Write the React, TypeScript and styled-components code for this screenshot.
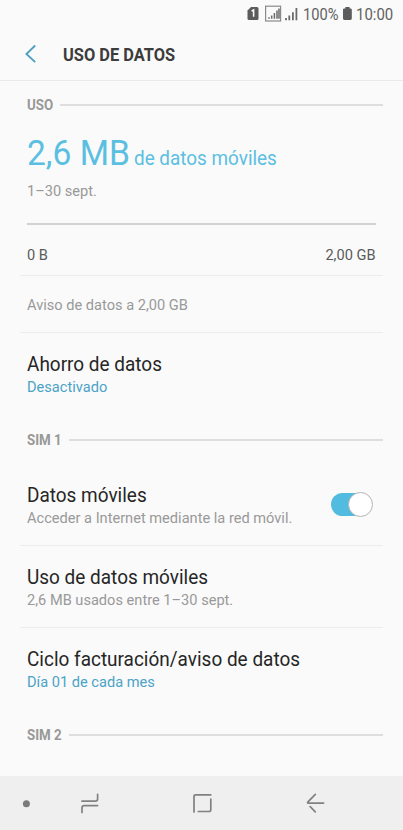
import React from "react";
import styled, { createGlobalStyle } from "styled-components";

const Global = createGlobalStyle`
  * { box-sizing: border-box; }
  body { margin: 0; background: #fafafa; font-family: Roboto, sans-serif; }
`;

const Phone = styled.div`
  width: 403px;
  height: 830px;
  display: flex;
  flex-direction: column;
  background: #fafafa;
  overflow: hidden;
`;

/* A single line of type, slightly condensed horizontally. */
const Label = styled.span<{ $scale?: number }>`
  display: block;
  white-space: nowrap;
  transform: scaleX(${p => p.$scale ?? 0.973});
  transform-origin: left center;
`;

const StatusBar = styled.div`
  height: 28px;
  display: flex;
  align-items: center;
  padding-left: 247px;
  color: #626262;
`;
const StatusText = styled(Label)<{ $width: number }>`
  width: ${p => p.$width}px;
  padding-top: 1px;
  font-size: 16.5px;
  line-height: 28px;
`;
const Icon = styled.svg`
  display: block;
  flex: none;
  fill: none;
`;

const Header = styled.header`
  height: 53px;
  padding-left: 24px;
  display: flex;
  align-items: center;
  gap: 25px;
  border-bottom: 1px solid #e9e9e9;
`;
const Title = styled(Label).attrs({ as: "h1" })`
  margin: 0;
  padding-top: 2px;
  color: #3c3c3c;
  font-size: 18.5px;
  line-height: 24px;
  font-weight: 700;
`;

const Content = styled.main`
  flex: 1;
  padding: 0 20px 0 20px;
`;

const Section = styled.div`
  height: 48px;
  padding-left: 7px;
  display: flex;
  align-items: center;
  &::after {
    content: "";
    flex: 1;
    height: 2px;
    margin-bottom: 1px;
    background: #dedede;
  }
`;
const SectionName = styled(Label)<{ $width: number }>`
  width: ${p => p.$width}px;
  padding-top: 1px;
  color: #989898;
  font-size: 15.5px;
  line-height: 21px;
  font-weight: 700;
`;

const Usage = styled.div`
  height: 147px;
  padding: 3px 7px 0;
  border-bottom: 1px solid #ececec;
`;
const Amount = styled.div`
  display: flex;
  align-items: baseline;
  color: #5bbfe1;
`;
const AmountValue = styled(Label)`
  width: 107px;
  font-size: 34.5px;
  line-height: 42px;
`;
const AmountUnit = styled(Label)`
  font-size: 20px;
`;
const Period = styled(Label)`
  margin-top: 7px;
  color: #989898;
  font-size: 15px;
  line-height: 20px;
`;
const Meter = styled.div`
  height: 2px;
  margin: 22px 0 20px;
  background: #d0d3d5;
`;
const Range = styled.div`
  display: flex;
  justify-content: space-between;
  color: #5a5a5a;
  font-size: 15px;
  line-height: 20px;
`;
const RangeEnd = styled(Label)`
  transform-origin: right center;
`;

const Notice = styled.div`
  height: 57px;
  padding: 19px 7px 0;
  border-bottom: 1px solid #ececec;
  color: #999;
  font-size: 15px;
  line-height: 20px;
`;

const Row = styled.div<{ $height: number; $last?: boolean }>`
  height: ${p => p.$height}px;
  padding: 20px 10px 0 7px;
  display: flex;
  justify-content: space-between;
  border-bottom: 1px solid ${p => (p.$last ? "transparent" : "#ececec")};
`;
const RowTitle = styled(Label)`
  color: #262626;
  font-size: 19.5px;
  line-height: 24px;
`;
const RowNote = styled(Label)<{ $active?: boolean }>`
  color: ${p => (p.$active ? "#4ba3c7" : "#999")};
  font-size: 15px;
  line-height: 20px;
`;

const Switch = styled.div`
  width: 42px;
  height: 23px;
  margin-top: 9px;
  flex: none;
  display: flex;
  align-items: center;
  justify-content: flex-end;
  border-radius: 12px;
  background: linear-gradient(90deg, #51bce0 30px, transparent 30px);
`;
const Knob = styled.div`
  width: 25px;
  height: 25px;
  flex: none;
  border: 1px solid #b5b5b5;
  border-radius: 50%;
  background: #fff;
`;

const NavBar = styled.nav`
  height: 54px;
  padding: 0 79px 0 22px;
  display: flex;
  align-items: center;
  background: #efefef;
`;
const NavIcon = styled(Icon)<{ $gap: number }>`
  margin-left: ${p => p.$gap}px;
  stroke: #818181;
  stroke-width: 1.7;
  stroke-linecap: round;
`;

function SettingText({ title, note, active }: { title: string; note: string; active?: boolean }) {
  return (
    <div>
      <RowTitle>{title}</RowTitle>
      <RowNote $active={active}>{note}</RowNote>
    </div>
  );
}

function StatusIcons() {
  return (
    <Icon width="56" height="28" viewBox="0 0 56 28">
      <path d="M0.5 10.5 L4 7 H10 Q11.5 7 11.5 8.5 V18.5 Q11.5 20 10 20 H2 Q0.5 20 0.5 18.5Z" fill="#5c5c5c" />
      <path d="M4.6 11 L6.6 10 V16.8" stroke="#fafafa" strokeWidth="1.6" />
      <rect x="18.6" y="6.2" width="15" height="14.8" stroke="#8a8a8a" strokeWidth="1.2" />
      <path d="M22 18.7V17.2 M24.7 18.7V15.5 M27.4 18.7V13 M30 18.7V10.5 M32 18.7V8.6" stroke="#6a6a6a" strokeWidth="1.5" />
      <path d="M39 20.3V18 M42.3 20.3V15.4 M45.9 20.3V12.3 M49.4 20.3V8" stroke="#6a6a6a" strokeWidth="1.8" />
    </Icon>
  );
}

export default function App() {
  return (
    <Phone>
      <Global />
      <StatusBar>
        <StatusIcons />
        <StatusText $scale={0.889} $width={39}>100%</StatusText>
        <Icon width="14" height="28" viewBox="0 0 14 28">
          <path d="M3.4 7H7.6V8.4H8.5Q9.8 8.4 9.8 9.7V18.6Q9.8 19.9 8.5 19.9H2.3Q1 19.9 1 18.6V9.7Q1 8.4 2.3 8.4H3.4Z" fill="#5c5c5c" />
        </Icon>
        <StatusText $scale={0.904} $width={36}>10:00</StatusText>
      </StatusBar>

      <Header>
        <Icon width="14" height="20" viewBox="0 0 14 20">
          <path d="M11.2 1.5 L2.4 10 L11.2 18.2" stroke="#4b9fc0" strokeWidth="1.8" />
        </Icon>
        <Title $scale={0.887}>USO DE DATOS</Title>
      </Header>

      <Content>
        <Section>
          <SectionName $scale={0.86} $width={33}>USO</SectionName>
        </Section>
        <Usage>
          <Amount>
            <AmountValue>2,6 MB</AmountValue>
            <AmountUnit $scale={0.945}>de datos móviles</AmountUnit>
          </Amount>
          <Period>1–30 sept.</Period>
          <Meter />
          <Range>
            <Label>0 B</Label>
            <RangeEnd>2,00 GB</RangeEnd>
          </Range>
        </Usage>
        <Notice>
          <Label>Aviso de datos a 2,00 GB</Label>
        </Notice>
        <Row $height={83} $last>
          <SettingText title="Ahorro de datos" note="Desactivado" active />
        </Row>

        <Section>
          <SectionName $scale={0.86} $width={42}>SIM 1</SectionName>
        </Section>
        <Row $height={82}>
          <SettingText title="Datos móviles" note="Acceder a Internet mediante la red móvil." />
          <Switch role="switch" aria-checked="true">
            <Knob />
          </Switch>
        </Row>
        <Row $height={82}>
          <SettingText title="Uso de datos móviles" note="2,6 MB usados entre 1–30 sept." />
        </Row>
        <Row $height={83} $last>
          <SettingText title="Ciclo facturación/aviso de datos" note="Día 01 de cada mes" active />
        </Row>

        <Section>
          <SectionName $scale={0.86} $width={42}>SIM 2</SectionName>
        </Section>
      </Content>

      <NavBar>
        <Icon width="9" height="9" viewBox="0 0 9 9">
          <circle cx="4.4" cy="4.7" r="3.5" fill="#7a7a7a" />
        </Icon>
        <NavIcon $gap={49} width="20" height="22" viewBox="0 0 20 22">
          <path d="M2 9.2H15.3Q17.6 9.2 17.6 7V2.3 M17.6 13.6H4.3Q2 13.6 2 15.8V20.5" />
        </NavIcon>
        <NavIcon $gap={92} width="22" height="22" viewBox="0 0 22 22">
          <path d="M2 20V4.5Q2 2.8 3.7 2.8H18.8 M18.8 7V17.8Q18.8 19.5 17.1 19.5H6.3" />
        </NavIcon>
        <NavIcon $gap={91} width="22" height="22" viewBox="0 0 22 22">
          <path d="M10.3 2.3L3 9.8Q2 11.1 3.2 11.1H18.6 M5.2 14.6L10.3 19.8" />
        </NavIcon>
      </NavBar>
    </Phone>
  );
}
